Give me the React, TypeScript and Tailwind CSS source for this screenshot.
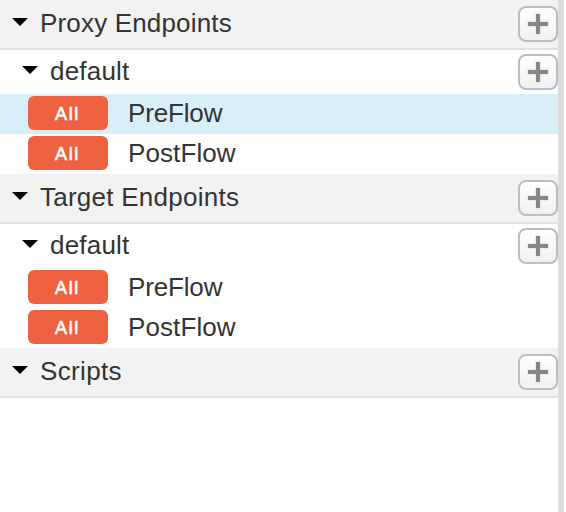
import type { ReactNode } from "react";

function Caret({ className }: { className: string }) {
  return (
    <svg className={`h-2 w-4 shrink-0 ${className}`} viewBox="0 0 16 8" aria-hidden="true">
      <path d="M0 0H16L8 8Z" fill="#000" />
    </svg>
  );
}

function AddButton({ className }: { className: string }) {
  return (
    <button
      type="button"
      aria-label="Add"
      className={`ml-auto flex h-9 w-10 shrink-0 items-center justify-center rounded-lg border-2 border-[#b4c0c3] bg-linear-to-b from-white to-[#f0f0f0] ${className}`}
    >
      <svg className="size-[22px]" viewBox="0 0 22 22" aria-hidden="true">
        <path d="M8.5 .5H13.5V8.5H21.5V13.5H13.5V21.5H8.5V13.5H.5V8.5H8.5Z" fill="#dedbdb" />
        <path d="M9 1H13V9H21V13H13V21H9V13H1V9H9Z" fill="#8a8585" />
      </svg>
    </button>
  );
}

function SectionHeader({ children, tracking }: { children: ReactNode; tracking: string }) {
  return (
    <div className="flex h-[50px] items-start border-b-2 border-[#e1e1e1] bg-[#f2f2f2] pl-3">
      <Caret className="mt-[18px]" />
      <span className={`mt-2 ml-3 leading-[30px] ${tracking}`}>{children}</span>
      <AddButton className="mt-1.5" />
    </div>
  );
}

function EndpointRow({ name }: { name: string }) {
  return (
    <div className="flex h-11 items-start pl-[22px]">
      <Caret className="mt-4" />
      <span className="mt-1.5 ml-3 leading-[30px] tracking-[0.2px]">{name}</span>
      <AddButton className="mt-1" />
    </div>
  );
}

function FlowRow({ name, tracking, selected = false }: { name: string; tracking: string; selected?: boolean }) {
  return (
    <div className={`flex h-10 items-start pl-7 ${selected ? "bg-[#d8eff9]" : ""}`}>
      <span className="mt-0.5 flex h-[34px] w-20 items-center justify-center rounded-md bg-[#ef6241] pt-px pr-px text-[18px] leading-none tracking-[1.6px] text-white [-webkit-text-stroke:0.6px_white]">
        All
      </span>
      <span className={`mt-1 ml-5 leading-[30px] ${tracking}`}>{name}</span>
    </div>
  );
}

export default function App() {
  return (
    <div className="flex h-[512px] w-[566px] bg-white font-['Liberation_Sans',Arial,sans-serif] text-[26px] text-[#333]">
      <div className="w-[558px]">
        <SectionHeader tracking="tracking-[0.17px]">Proxy Endpoints</SectionHeader>
        <EndpointRow name="default" />
        <FlowRow name="PreFlow" tracking="tracking-[-0.15px]" selected />
        <FlowRow name="PostFlow" tracking="tracking-[0.1px]" />
        <SectionHeader tracking="tracking-[0.25px]">Target Endpoints</SectionHeader>
        <EndpointRow name="default" />
        <FlowRow name="PreFlow" tracking="tracking-[-0.15px]" />
        <FlowRow name="PostFlow" tracking="tracking-[0.1px]" />
        <SectionHeader tracking="tracking-[0.35px]">Scripts</SectionHeader>
      </div>
      <div className="w-1.5 bg-[#dcdcdc]" />
    </div>
  );
}
